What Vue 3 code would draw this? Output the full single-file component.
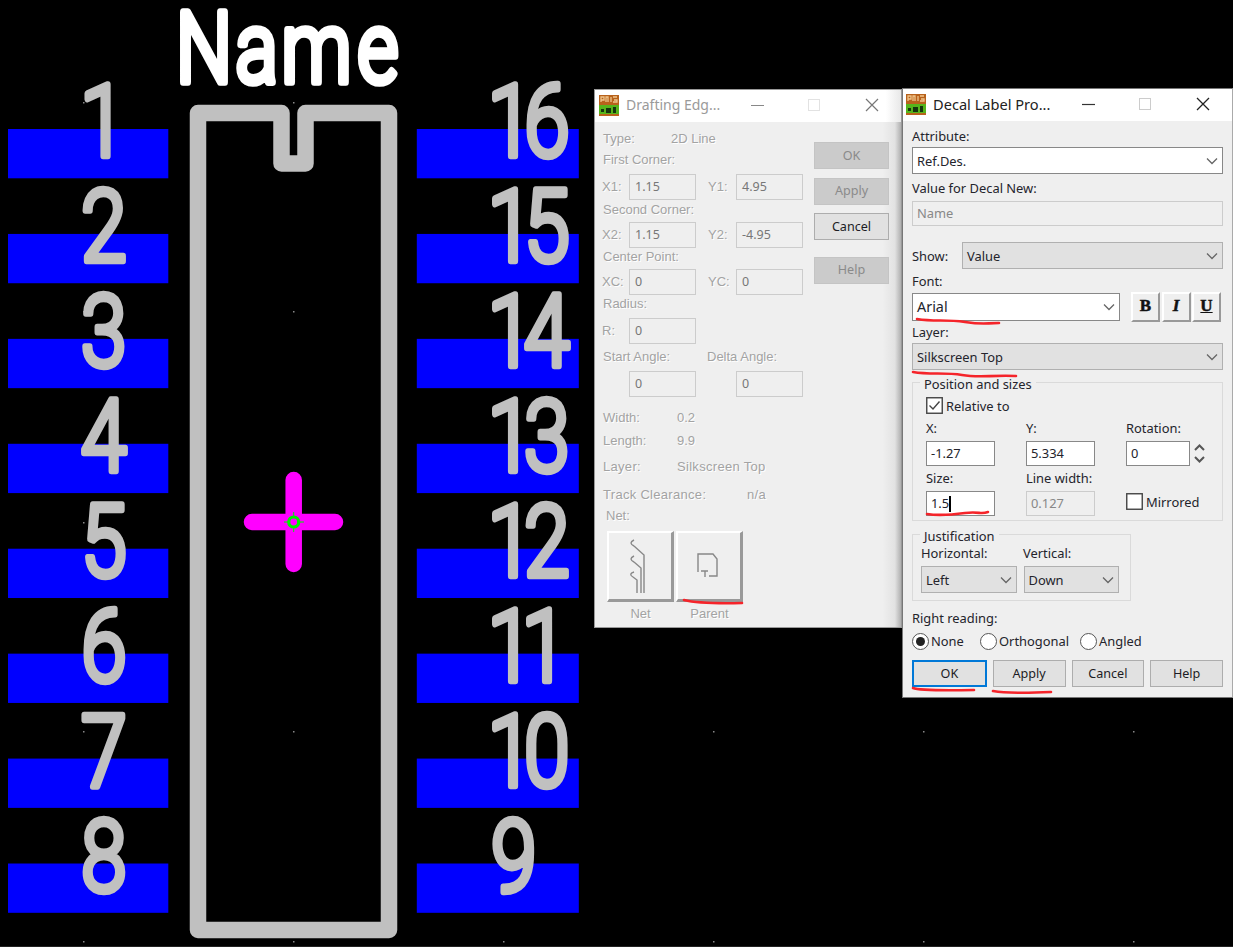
<script setup>
const pitch = 104.93
const leftPins = ['1', '2', '3', '4', '5', '6', '7', '8']
const rightPins = ['16', '15', '14', '13', '12', '11', '10', '9']
const SX = 0.82
const padY = (i) => 129 + i * pitch
const baseY = (i) => 156.4 + i * pitch
const leftX = (t) => (t === '1' ? 80 : 81) / SX
const rightX = (t) => (t.length === 2 ? `${487.5 / SX} ${(t === '11' ? 521.5 : 524) / SX}` : `${491 / SX}`)
const dots = [
  [83, 102], [293, 102], [83, 311], [293, 311], [83, 522], [83, 731], [293, 731],
  [713, 731], [923, 731], [1133, 731], [83, 941], [293, 941], [503, 941], [713, 941], [923, 941], [1133, 941],
]
</script>

<template>
  <main class="stage">
    <svg class="board" width="1233" height="947" viewBox="0 0 1233 947">
      <rect v-for="(p, i) in leftPins" :key="'l' + p" x="8" :y="padY(i)" width="160.3" height="49.3" fill="#00f" />
      <rect v-for="(p, i) in rightPins" :key="'r' + p" x="416.8" :y="padY(i)" width="162" height="49.3" fill="#00f" />
      <rect v-for="(d, i) in dots" :key="'d' + i" :x="d[0]" :y="d[1]" width="1.5" height="1.5" fill="#888" />
      <path class="outline" d="M198 113H281.5V163.5H305.5V113H389V930H198Z" />
      <path class="cross" d="M252 522H335M293.700 480V564" />
      <g class="origin">
        <path d="M293.700 512V516M293.700 528V532M284 522H288M300 522H304" />
        <circle cx="293.700" cy="522" r="5" />
      </g>
      <g class="num" :transform="`scale(${SX} 1)`">
        <text v-for="(p, i) in leftPins" :key="'tl' + p" :x="leftX(p)" :y="baseY(i)">{{ p }}</text>
        <text v-for="(p, i) in rightPins" :key="'tr' + p" :x="rightX(p)" :y="baseY(i)">{{ p }}</text>
      </g>
      <text class="name" transform="scale(.8 1)" x="220 294.500 352 447" y="81.5">Name</text>
      <path d="M0 946.5H1233" stroke="#222" />
    </svg>

    <section class="dialog drafting">
      <header class="bar">
        <svg class="logo" width="20" height="21" viewBox="0 0 20 21">
          <rect width="20" height="21" fill="#b8621c" /><rect y="10" width="20" height="9" fill="#55b51c" />
          <path d="M2 7V2H5V5H2M7 7V2H9V7M12 2V7M14 2H18M15 5H18V7H14" stroke="#f0c58c" fill="none" stroke-width="1.3" />
          <path d="M2 14H5V17H2ZM7 13H12V18H7ZM14 12H17V18H14Z" fill="#15350d" />
        </svg>
        <span class="title">Drafting Edg...</span>
        <svg class="caps" width="132" height="16" viewBox="0 0 132 16" fill="none">
          <path d="M0 8.500H13" stroke="#888" /><rect x="57.500" y="2.500" width="11" height="11" stroke="#e2e2e2" />
          <path d="M115 2L127 14M127 2L115 14" stroke="#777" stroke-width="1.2" />
        </svg>
      </header>
      <div class="draft-body">
        <div class="fields">
          <div class="row"><span class="type">Type:</span><span>2D Line</span></div>
          <div class="row">First Corner:</div>
          <div class="row pair"><span>X1:</span><i>1.15</i><span>Y1:</span><i>4.95</i></div>
          <div class="row">Second Corner:</div>
          <div class="row pair"><span>X2:</span><i>1.15</i><span>Y2:</span><i>-4.95</i></div>
          <div class="row">Center Point:</div>
          <div class="row pair"><span>XC:</span><i>0</i><span>YC:</span><i>0</i></div>
          <div class="row">Radius:</div>
          <div class="row pair"><span>R:</span><i>0</i></div>
          <div class="row"><span class="angle">Start Angle:</span><span>Delta Angle:</span></div>
          <div class="row pair"><span></span><i>0</i><span></span><i>0</i></div>
          <div class="row"><span class="prop">Width:</span><span>0.2</span></div>
          <div class="row"><span class="prop">Length:</span><span>9.9</span></div>
          <div class="row wide"><span class="prop">Layer:</span><span>Silkscreen Top</span></div>
          <div class="row wide"><span class="track">Track Clearance:</span><span>n/a</span></div>
          <div class="row net">Net:</div>
          <div class="tools">
            <div class="tool">
              <div class="face">
                <svg width="66" height="70" viewBox="0 0 66 70" fill="none" stroke="#888" stroke-width="1.4">
                  <path d="M37 62V24L27 15M34 62V37L27 31M30 62V49L26 46" />
                  <path d="M27 9Q21 12 27 15M27 25Q21 28 27 31M27 41Q21 43 26 46" />
                </svg>
              </div>Net
            </div>
            <div class="tool">
              <div class="face">
                <svg width="66" height="70" viewBox="0 0 66 70" fill="none" stroke="#888" stroke-width="1.4">
                  <path d="M22 41V23H37L41 28V45H33M25 40H32M29 40V46" />
                </svg>
              </div>Parent
            </div>
          </div>
        </div>
        <div class="side">
          <button class="dis">OK</button><button class="dis">Apply</button>
          <button>Cancel</button><button class="dis help">Help</button>
        </div>
      </div>
    </section>

    <section class="dialog decal">
      <header class="bar">
        <svg class="logo" width="20" height="21" viewBox="0 0 20 21">
          <rect width="20" height="21" fill="#b8621c" /><rect y="10" width="20" height="9" fill="#55b51c" />
          <path d="M2 7V2H5V5H2M7 7V2H9V7M12 2V7M14 2H18M15 5H18V7H14" stroke="#f0c58c" fill="none" stroke-width="1.3" />
          <path d="M2 14H5V17H2ZM7 13H12V18H7ZM14 12H17V18H14Z" fill="#15350d" />
        </svg>
        <span class="title">Decal Label Pro...</span>
        <svg class="caps" width="132" height="16" viewBox="0 0 132 16" fill="none">
          <path d="M1 8.500H14" stroke="#333" stroke-width="1.2" /><rect x="58.500" y="2.500" width="11" height="11" stroke="#ccc" />
          <path d="M116 2L128 14M128 2L116 14" stroke="#222" stroke-width="1.3" />
        </svg>
      </header>
      <div class="decal-body">
        <label class="l1">Attribute:</label>
        <div class="combo white">Ref.Des.<svg viewBox="0 0 12 8"><path d="M1 1.500L6 6.500L11 1.500" /></svg></div>
        <label class="l2">Value for Decal New:</label>
        <div class="input off">Name</div>
        <div class="show"><label>Show:</label><div class="combo">Value<svg viewBox="0 0 12 8"><path d="M1 1.500L6 6.500L11 1.500" /></svg></div></div>
        <label class="l3">Font:</label>
        <div class="font">
          <div class="combo white arial">Arial<svg viewBox="0 0 12 8"><path d="M1 1.500L6 6.500L11 1.500" /></svg></div>
          <b class="fmt">B</b><b class="fmt it">I</b><b class="fmt un">U</b>
        </div>
        <label class="l4">Layer:</label>
        <div class="combo">Silkscreen Top<svg viewBox="0 0 12 8"><path d="M1 1.500L6 6.500L11 1.500" /></svg></div>
        <div class="group pos">
          <span class="legend">Position and sizes</span>
          <div class="check"><svg width="17" height="17" viewBox="0 0 17 17"><rect x=".75" y=".75" width="15.500" height="15.500" /><path d="M3.500 8.500L7 12L13.500 4.500" /></svg>Relative to</div>
          <div class="cols c1"><label>X:</label><label>Y:</label><label>Rotation:</label></div>
          <div class="cols c2">
            <div class="input">-1.27</div><div class="input">5.334</div>
            <div class="rot"><div class="input">0</div>
              <svg width="11" height="21" viewBox="0 0 11 21" fill="none" stroke="#555" stroke-width="2"><path d="M1 7L5.500 2.500L10 7M1 14L5.500 18.500L10 14" /></svg>
            </div>
          </div>
          <div class="cols c3"><label>Size:</label><label>Line width:</label></div>
          <div class="cols c4">
            <div class="input">1.5<span class="caret"></span></div><div class="input off">0.127</div>
            <div class="check mir"><svg width="17" height="17" viewBox="0 0 17 17"><rect x=".75" y=".75" width="15.500" height="15.500" /></svg>Mirrored</div>
          </div>
        </div>
        <div class="group just">
          <span class="legend">Justification</span>
          <div class="jl"><label>Horizontal:</label><label>Vertical:</label></div>
          <div class="jc">
            <div class="combo">Left<svg viewBox="0 0 12 8"><path d="M1 1.500L6 6.500L11 1.500" /></svg></div>
            <div class="combo">Down<svg viewBox="0 0 12 8"><path d="M1 1.500L6 6.500L11 1.500" /></svg></div>
          </div>
        </div>
        <label class="l5">Right reading:</label>
        <div class="radios">
          <span class="r1"><em class="on"></em>None</span><span class="r2"><em></em>Orthogonal</span><span><em></em>Angled</span>
        </div>
        <div class="actions"><button class="primary">OK</button><button>Apply</button><button>Cancel</button><button>Help</button></div>
      </div>
    </section>

    <svg class="marks" width="1233" height="947" viewBox="0 0 1233 947">
      <path d="M684 600Q700 604 742 603" />
      <path d="M917 319C935 322 945 319 965 322S985 323 999 323" />
      <path d="M913 372C930 375 945 372 962 375S990 375 1016 376" />
      <path d="M927 514C940 516 950 515 965 513S980 515 988 512" />
      <path d="M913 688Q920 691 974 690" />
      <path d="M993 691Q1010 694 1051 692" />
    </svg>
  </main>
</template>

<style>
body { margin: 0; background: #000; }
</style>

<style scoped>
.stage { position: relative; width: 1233px; height: 947px; background: #000; overflow: hidden; font-family: "Noto Sans", "Open Sans", sans-serif; }
.stage * { box-sizing: border-box; }
.board { display: block; }
.outline { fill: none; stroke: #c0c0c0; stroke-width: 16.5; stroke-linejoin: round; }
.cross { stroke: #f0f; stroke-width: 16.5; stroke-linecap: round; }
.origin { fill: none; stroke: #00f000; stroke-width: 3.2; }
.origin path { stroke-width: 1; }
.num, .name { font-family: Roboto, sans-serif; font-weight: 300; font-size: 100.5px; fill: #c0c0c0; stroke: #c0c0c0; stroke-width: 6; stroke-linejoin: round; }
.num text, .name { vector-effect: non-scaling-stroke; }
.name { fill: #fff; stroke: #fff; font-size: 98.5px; stroke-width: 7; }
.marks { position: absolute; inset: 0; fill: none; stroke: #f5242a; stroke-width: 2.6; stroke-linecap: round; pointer-events: none; }

.dialog { position: absolute; background: #efefef; }
.drafting { left: 594px; top: 89px; width: 308px; height: 539px; border: 1px solid #999; background: linear-gradient(90deg, #efefef 94%, #e2e2e2 98%, #b0b0b0); }
.decal { left: 902px; top: 88px; width: 331px; height: 610px; border: 1px solid #777; border-right-color: #aaa; }
.bar { display: flex; align-items: center; height: 32px; background: #fff; padding: 0 0 2px 4px; }
.decal .bar { padding-left: 3px; }
.drafting .bar { background: linear-gradient(90deg, #fff 95%, #e8e8e8); }
.title { margin-left: 7px; font-size: 14px; line-height: 20px; white-space: nowrap; flex: 0 0 125px; color: #222; }
.decal .title { font-size: 14.6px; flex-basis: 148px; }
.drafting .title { color: #9a9a9a; }
.logo { flex: none; }
.caps { flex: none; }

.draft-body { display: flex; color: #a3a3a3; font: 13px/14px "Liberation Sans", Arial, sans-serif; letter-spacing: 0; }
.fields { display: grid; width: 218px; grid-template-rows: 24px 21px 33px 17px 31px 16px 31px 16px 33px 20px 33px 28px 23px 26px 28px 21px; padding-left: 8px; align-content: start; text-shadow: 1px 1px #fff; }
.row { display: flex; align-items: flex-end; white-space: nowrap; }
.wide { letter-spacing: .3px; }
.pair span { width: 27px; height: 20px; margin-left: -1px; }
.pair i { width: 67px; height: 26px; border: 1px solid #ccc; padding: 0 5px; font: 12.5px/23px "Noto Sans", sans-serif; color: #777; text-shadow: none; }
.pair i + span { margin-left: 12px; width: 28px; }
.type { width: 68px; }
.angle { width: 104px; }
.prop { width: 74px; }
.track { width: 144px; }
.net { padding-left: 3px; }
.tools { display: flex; gap: 2px; margin: 8px 0 0 4px; }
.tool { width: 67px; text-align: center; line-height: 24px; }
.face { height: 71px; border: 2px solid #fff; border-right: 3px solid #999; border-bottom: 3px solid #999; }
.face svg { display: block; margin: -2px; }
button { font: 12.6px/16px "Noto Sans", sans-serif; color: #1c1c24; border: 1px solid #adadad; background: #e1e1e1; padding: 0; margin: 0; border-radius: 0; }
.side { display: flex; flex-direction: column; width: 75px; margin-left: 1px; padding-top: 20px; gap: 8.5px; }
.side button { height: 27px; flex: none; }
.side .dis { background: #cbcbcb; border-color: #c4c4c4; color: #8a8a8a; }
.side .help { margin-top: 8px; }

.decal-body { padding: 0 9px; display: flex; flex-direction: column; font-size: 12.9px; line-height: 14px; color: #24242c; white-space: nowrap; }
label { display: block; height: 14px; }
.l1 { margin: 8px 0 4px; }
.l2 { margin: 7px 0 6px; }
.l3 { margin: 5px 0 5px; }
.l4 { margin: 3px 0 4px; }
.l5 { margin: 10px 0 7px; }
.combo { display: flex; align-items: center; justify-content: space-between; height: 27px; border: 1px solid #b0b0b0; background: #e1e1e1; padding: 0 4px; }
.combo svg { width: 12px; height: 8px; fill: none; stroke: #666; stroke-width: 1.3; }
.white { background: #fff; border-color: #888; }
.input { height: 25px; border: 1px solid #888; background: #fff; padding: 0 4px; line-height: 23px; display: flex; align-items: center; }
.off { border-color: #ccc; background: #efefef; color: #888; }
.show { display: flex; align-items: center; margin-top: 16px; }
.show label { width: 50px; }
.show .combo { flex: 1; }
.font { display: flex; height: 29px; }
.font .combo { width: 208px; height: 28px; margin-right: 11px; }
.arial { font-size: 14.4px; }
.fmt { width: 29px; height: 30px; margin: -1px 1.5px 0 0; border: 2px solid #fff; border-right-color: #999; border-bottom-color: #999; text-align: center; font: bold 17px/24px "Liberation Serif", serif; color: #111; -webkit-text-stroke: .5px #111; }
.it { font-style: italic; }
.un { text-decoration: underline; }
.group { border: 1px solid #dadada; position: relative; }
.legend { position: absolute; top: -7px; left: 7px; background: #efefef; padding: 0 4px; line-height: 16px; }
.pos { margin-top: 12px; height: 139px; padding: 14px 0 0 13px; }
.check { display: flex; align-items: center; height: 17px; gap: 3px; }
.check svg { fill: #fff; stroke: #444; stroke-width: 1.4; }
.check path { fill: none; }
.cols { display: grid; grid-template-columns: 100px 100px 1fr; }
.cols .input { width: 69px; }
.c1 { margin: 7px 0 6px; }
.c3 { margin: 5px 0 6px; }
.rot { display: flex; align-items: center; gap: 4px; }
.cols .rot .input { width: 64px; }
.caret { width: 1.5px; height: 16px; background: #000; }
.mir { margin-top: 2px; }
.just { margin-top: 13px; width: 219px; height: 67px; padding: 11px 0 0 8px; }
.jl { display: grid; grid-template-columns: 102px 1fr; margin-bottom: 6px; }
.jc { display: flex; gap: 7px; }
.jc .combo { width: 95.500px; }
.radios { display: flex; height: 18px; }
.radios span { display: flex; align-items: center; gap: 2px; }
.radios .r1 { width: 68px; }
.radios .r2 { width: 100px; }
em { flex: none; width: 17px; height: 17px; border: 1.5px solid #555; border-radius: 50%; background: #fff; display: flex; align-items: center; justify-content: center; }
.on::after { content: ""; width: 9px; height: 9px; border-radius: 50%; background: #222; }
.actions { display: flex; gap: 6px; margin-top: 10px; }
.actions button { flex: 1; height: 27px; }
.actions .primary { border: 2px solid #0078d7; }
</style>
